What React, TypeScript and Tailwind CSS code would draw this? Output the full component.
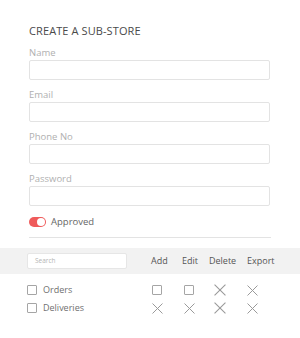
import React from 'react'

const fields = ['Name', 'Email', 'Phone No', 'Password']

const Box = ({ className = '' }: { className?: string }) => (
  <span className={`block w-[10px] h-[10px] border border-[#a5a5a5] rounded-[1px] ${className}`} />
)

const Cross = ({ className = '', size = 11 }: { className?: string; size?: number }) => (
  <svg width={size} height={size} viewBox="0 0 11 11" className={className}>
    <path d="M0.5 0.5 L10.5 10.5 M10.5 0.5 L0.5 10.5" stroke="#9a9a9a" strokeWidth="1" fill="none" />
  </svg>
)

const rows = [
  { name: 'Orders', perms: [true, true, false, false] },
  { name: 'Deliveries', perms: [false, false, false, false] },
]

const cols = ['w-[31px]', 'w-[27px]', 'w-[38px]', 'w-[30px]']
const iconOffset = ['ml-[1px]', 'ml-[2px]', 'ml-[5px]', 'ml-0']

const App: React.FC = () => {
  return (
    <div className="w-[300px] h-[338px] bg-white font-['Open_Sans',sans-serif]">
      <div className="pt-[24px] px-[29px]">
        <h2 className="text-[11px] leading-[14px] text-[#4a4a4a] tracking-[0.1px]">CREATE A SUB-STORE</h2>
        {fields.map((f) => (
          <div key={f} className="mt-[9px]">
            <label className="block text-[9.5px] leading-[12px] text-[#b0b0b0]">{f}</label>
            <div className="mt-[1px] h-[20px] w-[241px] border border-[#e3e3e3] rounded-[2px]" />
          </div>
        ))}
        <div className="mt-[9px] flex items-center h-[14px]">
          <span className="relative w-[17px] h-[10px] rounded-full bg-[#ef5b5b]">
            <span className="absolute right-[1px] top-[1px] w-[8px] h-[8px] rounded-full bg-white" />
          </span>
          <span className="ml-[5px] text-[9.5px] text-[#666]">Approved</span>
        </div>
        <div className="mt-[8px] border-t border-[#e3e3e3]" />
      </div>

      <div className="mt-[10px] h-[26px] bg-[#f2f2f2] flex items-center pl-[27px]">
        <div className="w-[100px] h-[16px] bg-white border border-[#e6e6e6] rounded-[2px] flex items-center pl-[7px] text-[6.5px] text-[#b5b5b5]">
          Search
        </div>
        <div className="ml-[24px] flex text-[9px] text-[#555]">
          <span className={cols[0]}>Add</span>
          <span className={cols[1]}>Edit</span>
          <span className={cols[2]}>Delete</span>
          <span className={cols[3]}>Export</span>
        </div>
      </div>

      <div className="mt-[7px] pl-[27px]">
        {rows.map((r) => (
          <div key={r.name} className="h-[18px] flex items-center">
            <Box />
            <span className="ml-[6px] w-[108px] text-[9px] text-[#707070]">{r.name}</span>
            <div className="flex items-center">
              {r.perms.map((p, i) => (
                <span key={i} className={`${cols[i]} flex`}>
                  {p ? (
                    <Box className={iconOffset[i]} />
                  ) : (
                    <Cross className={iconOffset[i]} size={i === 2 ? 12 : 11} />
                  )}
                </span>
              ))}
            </div>
          </div>
        ))}
      </div>
    </div>
  )
}

export default App
